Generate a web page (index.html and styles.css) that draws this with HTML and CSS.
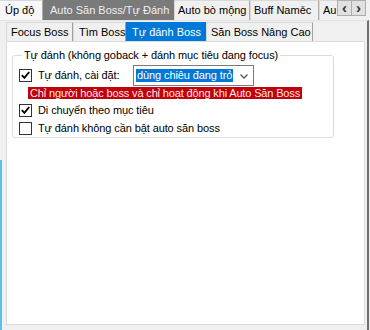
FILE: index.html
```html
<!DOCTYPE html>
<html>
<head>
<meta charset="utf-8">
<link rel="stylesheet" href="styles.css">
</head>
<body>
<div class="window">
  <div class="strip1">
    <div class="tab1 t-up">Úp độ</div>
    <div class="tab1 t-dark">Auto Săn Boss/Tự Đánh</div>
    <div class="tab1 t-bo">Auto bò mộng</div>
    <div class="tab1 t-buff">Buff Naměc</div>
    <div class="tab1 t-au">Au</div>
    <div class="arrows">
      <div class="arr">&lsaquo;</div>
      <div class="arr">&rsaquo;</div>
    </div>
  </div>
  <div class="outer">
    <div class="strip2">
      <div class="tab2 t-focus">Focus Boss</div>
      <div class="tab2 t-tim">Tìm Boss</div>
      <div class="tab2 t-sel">Tự đánh Boss</div>
      <div class="tab2 t-nc">Săn Boss Nâng Cao</div>
    </div>
    <div class="page">
      <fieldset class="group">
        <legend>Tự đánh (không goback + đánh mục tiêu đang focus)</legend>
        <div class="row row-first">
          <span class="cb checked"><svg width="9" height="8" viewBox="0 0 9 8"><path d="M0.8 4.2 L3.4 6.8 L8.2 1" fill="none" stroke="#000" stroke-width="1.9"/></svg></span>
          <span class="lbl lbl-first">Tự đánh, cài đặt:</span>
          <div class="select"><span class="sel-text">dùng chiêu đang trỏ</span><svg class="caret" width="8" height="5" viewBox="0 0 8 5"><path d="M0.5 0.5 L4 4 L7.5 0.5" fill="none" stroke="#555" stroke-width="1.3"/></svg></div>
        </div>
        <div class="warn">Chỉ người hoặc boss và chỉ hoạt động khi Auto Săn Boss</div>
        <div class="row">
          <span class="cb checked"><svg width="9" height="8" viewBox="0 0 9 8"><path d="M0.8 4.2 L3.4 6.8 L8.2 1" fill="none" stroke="#000" stroke-width="1.9"/></svg></span>
          <span class="lbl">Di chuyển theo mục tiêu</span>
        </div>
        <div class="row">
          <span class="cb"></span>
          <span class="lbl">Tự đánh không cần bật auto săn boss</span>
        </div>
      </fieldset>
    </div>
  </div>
  <div class="focus-strip"></div>
</div>
</body>
</html>
```

FILE: styles.css
```css
* { box-sizing: border-box; }
html, body { margin: 0; padding: 0; }
body {
  width: 370px;
  height: 330px;
  overflow: hidden;
  background: #f0f0f0;
  font-family: "Liberation Sans", Arial, sans-serif;
  font-size: 11px;
  color: #000;
}
.window {
  width: 370px;
  height: 330px;
  position: relative;
}
.focus-strip {
  position: absolute;
  left: 0;
  top: 160px;
  width: 2px;
  height: 170px;
  background: #5bbfec;
}
.strip1 {
  display: flex;
  height: 20px;
  width: 370px;
  overflow: hidden;
  align-items: flex-end;
}
.tab1 {
  height: 20px;
  line-height: 19px;
  padding-left: 5px;
  white-space: nowrap;
  border: 1px solid #d9d9d9;
  border-bottom: none;
  border-right-color: #adadad;
  background: #f0f0f0;
  overflow: hidden;
  flex: none;
}
.t-up { width: 43px; background: #f7f7f7; border-left: none; }
.t-dark { width: 131px; background: #7a7a7a; color: #f0f0f0; border-color: #7a7a7a; padding-left: 6px; }
.t-bo { width: 76px; padding-left: 3px; }
.t-buff { width: 69px; padding-left: 3px; }
.t-au { width: 18px; padding-left: 3px; border-right: none; }
.arrows {
  display: flex;
  align-self: flex-start;
  height: 16px;
  flex: none;
}
.arr {
  width: 15px;
  height: 16px;
  border: 1px solid #adadad;
  background: #e1e1e1;
  text-align: center;
  line-height: 13px;
  font-size: 15px;
  font-weight: bold;
  color: #333;
}
.arr + .arr { border-left: none; width: 14px; }
.outer {
  border-right: 2px solid #6e6e6e;
  border-top: 1px solid #e3e3e3;
  height: 310px;
  width: 369px;
  padding: 1px 0 0 6px;
}
.strip2 {
  display: flex;
  height: 19px;
}
.tab2 {
  height: 19px;
  line-height: 18px;
  padding-left: 4px;
  white-space: nowrap;
  border: 1px solid #d9d9d9;
  border-bottom: none;
  border-right-color: #a0a0a0;
  background: #f0f0f0;
  flex: none;
}
.t-focus { width: 67px; }
.t-tim { width: 53px; padding-left: 5px; }
.t-sel { width: 80px; background: #0078d7; color: #fff; border-color: #0078d7; padding-left: 5px; }
.t-nc { width: 107px; padding-left: 4px; }
.page {
  background: #fff;
  border: 1px solid #dcdcdc;
  width: 359px;
  height: 284px;
  padding: 7px 0 0 5px;
  letter-spacing: -0.1px;
}
.group {
  margin: 0;
  width: 322px;
  height: 89px;
  border: 1px solid #dcdcdc;
  border-radius: 3px;
  padding: 0 0 0 6px;
}
.group legend {
  padding: 0 2px;
  margin-left: 3px;
  line-height: 13px;
  height: 13px;
}
.row {
  display: flex;
  align-items: center;
  height: 18px;
}
.row-first { height: 22px; margin-top: 2px; }
.cb {
  width: 13px;
  height: 13px;
  border: 1px solid #333;
  background: #fff;
  display: flex;
  align-items: center;
  justify-content: center;
  flex: none;
}
.lbl { margin-left: 6px; white-space: nowrap; }
.lbl-first { width: 89px; }
.select {
  margin-left: 6px;
  width: 121px;
  height: 21px;
  border: 1px solid #7a7a7a;
  display: flex;
  align-items: center;
  padding-left: 2px;
  position: relative;
}
.sel-text {
  background: #0078d7;
  color: #fff;
  padding: 0 1px;
  line-height: 13px;
  white-space: nowrap;
}
.caret { position: absolute; right: 5px; top: 8px; }
.warn {
  display: inline-block;
  margin-left: 9px;
  margin-top: 1px;
  height: 12px;
  line-height: 12px;
  background: #c0000a;
  color: #ffe8e8;
  padding: 0 2px;
  white-space: nowrap;
  letter-spacing: -0.15px;
}
.warn + .row { margin-top: 2px; }
```
